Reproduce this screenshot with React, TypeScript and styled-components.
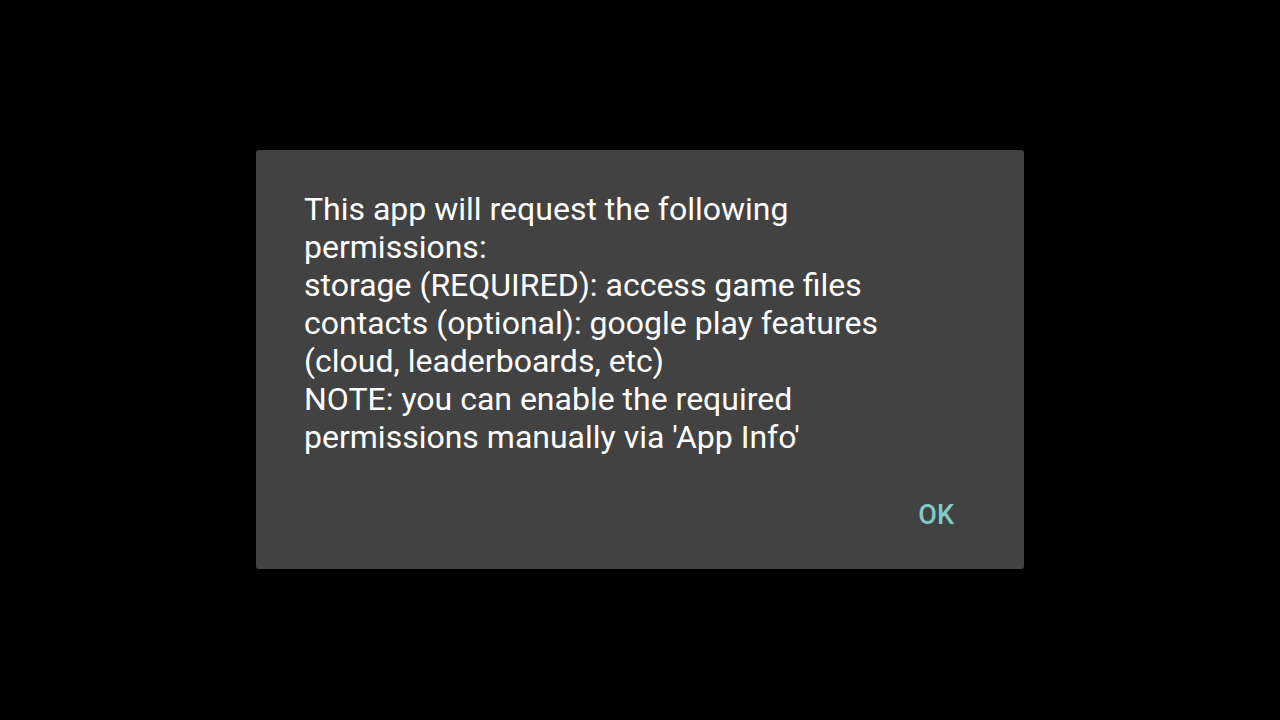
import React from "react";
import styled, { createGlobalStyle } from "styled-components";

const GlobalStyle = createGlobalStyle`
	html, body {
		margin: 0;
		padding: 0;
		background: #000000;
	}
	body {
		font-family: Roboto, "Noto Sans", sans-serif;
	}
`;

const Screen = styled.div`
	width: 100%;
	height: 100vh;
	box-sizing: border-box;
	padding-bottom: 1px;
	display: flex;
	align-items: center;
	justify-content: center;
	background: #000000;
`;

const Dialog = styled.div`
	width: 768px;
	background: #424242;
	border-radius: 3px;
	display: flex;
	flex-direction: column;
	box-sizing: border-box;
	padding: 40px 0 36px;
`;

const Message = styled.div`
	padding: 0 48px;
	color: #ffffff;
	font-size: 32px;
	line-height: 38px;
	white-space: pre-line;
`;

const Actions = styled.div`
	display: flex;
	justify-content: flex-end;
	padding: 41px 54px 0;
`;

const TextButton = styled.button`
	background: none;
	border: none;
	padding: 0 16px;
	font-family: Roboto, "Noto Sans", sans-serif;
	font-weight: 500;
	font-size: 27px;
	line-height: 36px;
	color: #80cbc4;
	cursor: pointer;
`;

const lines = [
	"This app will request the following",
	"permissions:",
	"storage (REQUIRED): access game files",
	"contacts (optional): google play features",
	"(cloud, leaderboards, etc)",
	"NOTE: you can enable the required",
	"permissions manually via 'App Info'",
];

function App() {
	return (
		<>
			<GlobalStyle />
			<Screen>
				<Dialog>
					<Message>{lines.join("\n")}</Message>
					<Actions>
						<TextButton>OK</TextButton>
					</Actions>
				</Dialog>
			</Screen>
		</>
	);
}

export default App;
